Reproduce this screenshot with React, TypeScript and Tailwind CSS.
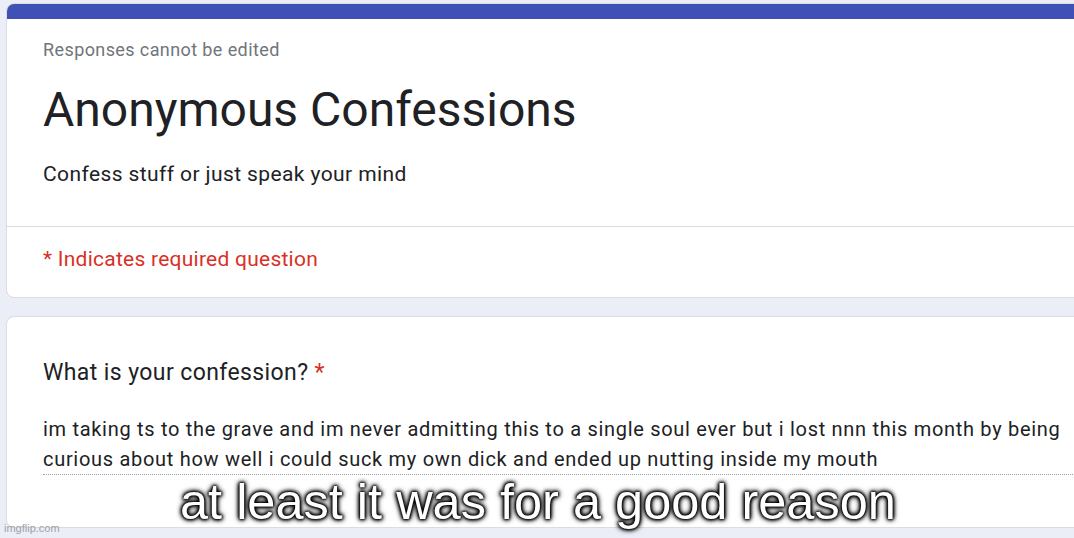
export default function App() {
  return (
    <div className="relative h-[538px] w-[1074px] overflow-hidden bg-[#eceef7] font-['Roboto',sans-serif]">
      <div className="flex w-[1100px] flex-col gap-[18px] pl-[6px] pt-[3px]">
        <div className="overflow-hidden rounded-lg border border-[#dadce0] bg-white">
          <div className="h-[15px] bg-[#4051b5]" />
          <div className="px-[36px] pb-[35px] pt-[17px]">
            <div className="text-[18px] tracking-[0.4px] text-[#70757a]">Responses cannot be edited</div>
            <h1 className="mt-[18px] text-[48px] leading-[58px] text-[#202124]">Anonymous Confessions</h1>
            <p className="mt-[20px] text-[21px] tracking-[0.4px] text-[#202124]">Confess stuff or just speak your mind</p>
          </div>
          <div className="border-t border-[#dadce0] px-[36px] pb-[22px] pt-[17px] text-[21px] tracking-[0.25px] text-[#d93025]">
            * Indicates required question
          </div>
        </div>
        <div className="h-[212px] rounded-lg border border-[#dadce0] bg-white px-[36px] pt-[39px]">
          <div className="text-[23px] tracking-[0.4px] text-[#202124]">
            What is your confession? <span className="text-[#d93025]">*</span>
          </div>
          <div className="mt-[23px] w-[1030px] border-b border-dotted border-[#9aa0a6] text-[20px] leading-[30px] tracking-[0.7px] text-[#202124]">
            im taking ts to the grave and im never admitting this to a single soul ever but i lost nnn this month by being curious about how well i could suck my own dick and ended up nutting inside my mouth
          </div>
        </div>
      </div>
      <div className="absolute left-[180px] top-[470px] font-['Liberation_Sans',sans-serif] text-[50.5px] leading-[64px] text-white [text-shadow:0_0_2px_#000,0_0_3px_#000,0_0_4px_#000,0_0_5px_#000,0_0_6px_#000]">
        at least it was for a good reason
      </div>
      <div className="absolute bottom-[2px] left-[4px] font-['Liberation_Sans',sans-serif] text-[11px] text-[#a0a0a8]">imgflip.com</div>
    </div>
  )
}
